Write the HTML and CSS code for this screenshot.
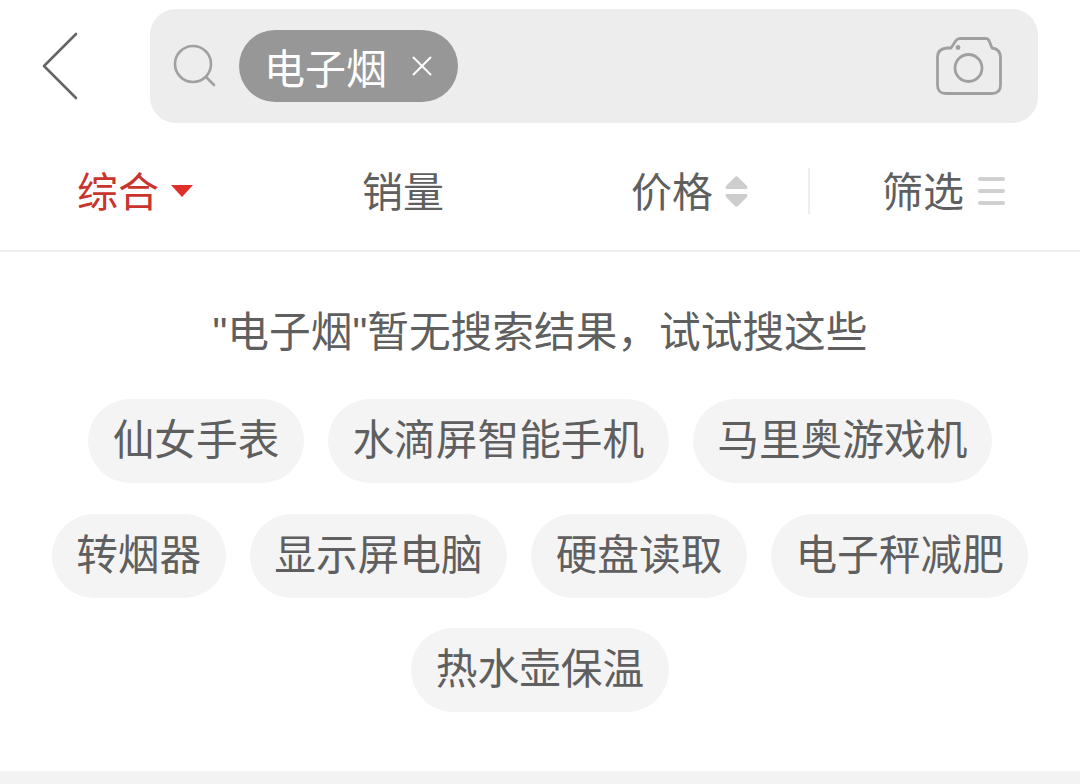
FILE: index.html
```html
<!DOCTYPE html>
<html lang="zh-CN">
<head>
    <meta charset="UTF-8">
    <meta name="viewport" content="width=device-width, initial-scale=1.0">
    <title>搜索结果</title>
    <link rel="stylesheet" href="styles.css">
</head>
<body>
    <header class="search-header">
        <a class="back-btn" href="#">
            <svg width="38" height="68" viewBox="0 0 38 68"><path d="M35 2 L3 34 L35 66" fill="none" stroke="#666" stroke-width="2.6" stroke-linecap="round" stroke-linejoin="round"/></svg>
        </a>
        <div class="search-box">
            <svg class="search-icon" width="44" height="44" viewBox="0 0 44 44">
                <circle cx="20" cy="20" r="18" fill="none" stroke="#a0a0a0" stroke-width="2.6"/>
                <path d="M33 33 L41 41" stroke="#a0a0a0" stroke-width="2.6" stroke-linecap="round"/>
            </svg>
            <div class="chip">
                <span>电子烟</span>
                <svg width="20" height="20" viewBox="0 0 20 20"><path d="M1 1 L19 19 M19 1 L1 19" stroke="#fff" stroke-width="2"/></svg>
            </div>
            <svg class="camera-icon" width="66" height="58" viewBox="0 0 66 58">
                <path d="M11 11 H15 L20 3.500 Q21.500 1.500 24 1.500 H50 Q52 1.500 53 3.500 L56 11 Q64 12 64.500 20 V48 Q64.500 56.500 56 56.500 H10 Q1.500 56.500 1.500 48 V20 Q1.500 12 11 11 Z" fill="none" stroke="#a0a0a0" stroke-width="2.8" stroke-linejoin="round"/>
                <circle cx="32.500" cy="31" r="13.500" fill="none" stroke="#a0a0a0" stroke-width="2.800"/>
                <circle cx="22" cy="10.500" r="2.400" fill="#a0a0a0"/>
            </svg>
        </div>
    </header>

    <nav class="sort-bar">
        <div class="sort-item active">
            <span>综合</span>
            <i class="arrow-down"></i>
        </div>
        <div class="sort-item sales">
            <span>销量</span>
        </div>
        <div class="sort-item price">
            <span>价格</span>
            <svg width="23" height="31" viewBox="0 0 23 31"><path d="M10 1 Q11.500 -0.500 13 1 L22 10 Q23 13 21 13 H2 Q0 13 1 10 Z M2 18 H21 Q23 18 22 21 L13 30 Q11.500 31.500 10 30 L1 21 Q0 18 2 18 Z" fill="#cdcdcd"/></svg>
        </div>
        <div class="sort-item filter">
            <span>筛选</span>
            <div class="filter-lines"><b></b><b></b><b></b></div>
        </div>
    </nav>

    <section class="no-result">
        <p class="tip">"电子烟"暂无搜索结果，试试搜这些</p>
        <div class="tags">
            <a class="tag">仙女手表</a>
            <a class="tag">水滴屏智能手机</a>
            <a class="tag">马里奥游戏机</a>
            <a class="tag">转烟器</a>
            <a class="tag">显示屏电脑</a>
            <a class="tag">硬盘读取</a>
            <a class="tag">电子秤减肥</a>
            <a class="tag">热水壶保温</a>
        </div>
    </section>

    <div class="bottom-band"></div>
</body>
</html>
```

FILE: styles.css
```css
* {
    margin: 0;
    padding: 0;
    box-sizing: border-box;
}

html, body {
    height: 784px;
    overflow: hidden;
}

body {
    font-family: "Liberation Sans", "Noto Sans CJK SC", sans-serif;
    background-color: #ffffff;
    color: #5f5f5f;
    display: flex;
    flex-direction: column;
}

.search-header {
    display: flex;
    align-items: center;
    height: 132px;
    padding: 0 42px 0 41px;
}

.back-btn {
    display: flex;
    width: 109px;
    flex-shrink: 0;
}

.search-box {
    flex: 1;
    height: 114px;
    display: flex;
    align-items: center;
    background-color: #ededed;
    border-radius: 26px;
    padding: 0 36px 0 23px;
}

.search-icon {
    flex-shrink: 0;
}

.chip {
    display: flex;
    align-items: center;
    gap: 25px;
    height: 72px;
    margin-left: 22px;
    padding: 0 26px 0 25px;
    border-radius: 36px;
    background-color: #979797;
    color: #ffffff;
    font-size: 41px;
}

.camera-icon {
    margin-left: auto;
}

.sort-bar {
    display: grid;
    grid-template-columns: 270px 270px 268px 272px;
    align-items: center;
    height: 120px;
    border-bottom: 2px solid #efefef;
}

.sort-item {
    display: flex;
    align-items: center;
    justify-content: center;
    gap: 12px;
    font-size: 41px;
    height: 46px;
}

.sort-item span {
    padding-bottom: 5px;
}

.sort-item.active {
    color: #c9352d;
}

.sort-item.sales {
    padding-right: 4px;
}

.sort-item.price {
    padding-left: 31px;
}

.sort-item.filter {
    border-left: 2px solid #eeeeee;
    gap: 14px;
    padding-right: 3px;
}

.arrow-down {
    width: 0;
    height: 0;
    border-left: 11px solid transparent;
    border-right: 11px solid transparent;
    border-top: 12px solid #e0302a;
}

.filter-lines {
    display: flex;
    flex-direction: column;
    gap: 8px;
}

.filter-lines b {
    display: block;
    width: 27px;
    height: 4px;
    border-radius: 2px;
    background-color: #d0d0d0;
}

.no-result {
    flex: 1;
    display: flex;
    flex-direction: column;
    align-items: center;
    padding-top: 52px;
}

.tip {
    font-size: 41.7px;
    line-height: 58px;
    margin-bottom: 37px;
}

.tags {
    display: flex;
    flex-wrap: wrap;
    justify-content: center;
    gap: 30.5px 24px;
    width: 100%;
}

.tag {
    height: 84px;
    line-height: 84px;
    padding: 0 24.5px;
    border-radius: 42px;
    background-color: #f4f4f4;
    font-size: 41.7px;
}

.bottom-band {
    height: 13px;
    background-color: #f3f3f3;
}
```
